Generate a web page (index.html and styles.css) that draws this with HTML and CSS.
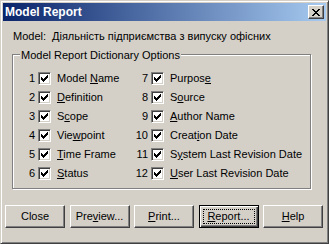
FILE: index.html
```html
<!DOCTYPE html>
<html lang="uk">
<head>
    <meta charset="UTF-8">
    <meta name="viewport" content="width=device-width, initial-scale=1.0">
    <link rel="stylesheet" href="styles.css">
</head>
<body>
    <div class="window">
        <div class="titlebar">
            <span class="title">Model Report</span>
            <button class="close-box" aria-label="Close">
                <svg width="8" height="7" viewBox="0 0 8 7" shape-rendering="crispEdges">
                    <path d="M0 0h2v1h-2z M6 0h2v1h-2z M1 1h2v1h-2z M5 1h2v1h-2z M2 2h4v1h-4z M3 3h2v1h-2z M2 4h4v1h-4z M1 5h2v1h-2z M5 5h2v1h-2z M0 6h2v1h-2z M6 6h2v1h-2z"/>
                </svg>
            </button>
        </div>

        <div class="model-row">
            <span>Model:</span>
            <span>Діяльність підприємства з випуску офісних</span>
        </div>

        <div class="group">
            <span class="group-title">Model Report Dictionary Options</span>
            <div class="options">
                <div class="option"><span class="num">1</span><span class="cb"></span><span class="lbl">Model <u>N</u>ame</span></div>
                <div class="option"><span class="num">2</span><span class="cb"></span><span class="lbl"><u>D</u>efinition</span></div>
                <div class="option"><span class="num">3</span><span class="cb"></span><span class="lbl">S<u>c</u>ope</span></div>
                <div class="option"><span class="num">4</span><span class="cb"></span><span class="lbl">Vie<u>w</u>point</span></div>
                <div class="option"><span class="num">5</span><span class="cb"></span><span class="lbl"><u>T</u>ime Frame</span></div>
                <div class="option"><span class="num">6</span><span class="cb"></span><span class="lbl"><u>S</u>tatus</span></div>
                <div class="option"><span class="num">7</span><span class="cb"></span><span class="lbl">Purpos<u>e</u></span></div>
                <div class="option"><span class="num">8</span><span class="cb"></span><span class="lbl">S<u>o</u>urce</span></div>
                <div class="option"><span class="num">9</span><span class="cb"></span><span class="lbl"><u>A</u>uthor Name</span></div>
                <div class="option"><span class="num">10</span><span class="cb"></span><span class="lbl">Creat<u>i</u>on Date</span></div>
                <div class="option"><span class="num">11</span><span class="cb"></span><span class="lbl">S<u>y</u>stem Last Revision Date</span></div>
                <div class="option"><span class="num">12</span><span class="cb"></span><span class="lbl"><u>U</u>ser Last Revision Date</span></div>
            </div>
        </div>

        <div class="buttons">
            <button class="btn"><span>Close</span></button>
            <button class="btn"><span>Pre<u>v</u>iew...</span></button>
            <button class="btn"><span><u>P</u>rint...</span></button>
            <button class="btn default"><span><u>R</u>eport...</span></button>
            <button class="btn"><span><u>H</u>elp</span></button>
        </div>
    </div>

    <script>
        // same check mark in every box
        const mark = '<svg width="7" height="7" viewBox="0 0 7 7" shape-rendering="crispEdges">' +
            '<path d="M6 0h1v1h-1z M5 1h2v1h-2z M0 2h1v1h-1z M4 2h3v1h-3z M0 3h2v1h-2z M3 3h3v1h-3z M0 4h5v1h-5z M1 5h3v1h-3z M2 6h1v1h-1z"/></svg>';
        document.querySelectorAll('.cb').forEach(cb => {
            cb.innerHTML = mark;
        });
    </script>
</body>
</html>
```

FILE: styles.css
```css
body {
    margin: 0;
    font-family: "Liberation Sans", Arial, sans-serif;
    font-size: 11px;
    line-height: 13px;
    color: #000;
}

.window {
    width: 329px;
    height: 244px;
    box-sizing: border-box;
    background: #d4d0c8;
    border: 1px solid;
    border-color: #d4d0c8 #404040 #404040 #d4d0c8;
    box-shadow: inset 1px 1px #fff, inset -1px -1px #808080;
    padding: 2px;
}

.titlebar {
    height: 18px;
    display: flex;
    align-items: center;
    justify-content: space-between;
    padding: 0 2px;
    background: linear-gradient(to right, #0a246a, #a6caf0);
}

.title {
    color: #fff;
    font-weight: bold;
    font-size: 12px;
}

.close-box {
    width: 16px;
    height: 14px;
    box-sizing: border-box;
    padding: 0;
    display: flex;
    align-items: center;
    justify-content: center;
    background: #d4d0c8;
    border: 1px solid;
    border-color: #fff #404040 #404040 #fff;
    box-shadow: inset -1px -1px #808080;
}

.close-box svg {
    fill: #000;
}

.model-row {
    display: grid;
    grid-template-columns: 39px auto;
    margin: 9px 0 0 10px;
}

.group {
    position: relative;
    width: 299px;
    height: 135px;
    box-sizing: border-box;
    margin: 11px 0 0 9px;
    border: 1px solid #808080;
    box-shadow: inset 1px 1px #fff, 1px 1px #fff;
    padding: 14px 0 0 7px;
}

.group-title {
    position: absolute;
    top: -6px;
    left: 7px;
    padding: 0 1px;
    background: #d4d0c8;
}

.options {
    display: grid;
    grid-template-columns: 113px auto;
    grid-template-rows: repeat(6, 19px);
    grid-auto-flow: column;
}

.option {
    display: flex;
    align-items: center;
}

.num {
    width: 15px;
    text-align: right;
}

.cb {
    width: 13px;
    height: 13px;
    box-sizing: border-box;
    margin-left: 3px;
    display: flex;
    align-items: center;
    justify-content: center;
    background: #fff;
    border: 1px solid;
    border-color: #808080 #fff #fff #808080;
    box-shadow: inset 1px 1px #404040, inset -1px -1px #d4d0c8;
}

.cb svg {
    fill: #000;
}

.lbl {
    margin-left: 6px;
    white-space: nowrap;
}

.buttons {
    display: flex;
    justify-content: space-between;
    width: 318px;
    margin: 16px 0 0 2px;
}

.btn {
    width: 60px;
    height: 23px;
    box-sizing: border-box;
    padding: 3px;
    display: flex;
    background: #d4d0c8;
    border: 1px solid;
    border-color: #fff #404040 #404040 #fff;
    box-shadow: inset -1px -1px #808080;
    font: inherit;
    color: #000;
}

.btn span {
    flex: 1;
    display: flex;
    align-items: center;
    justify-content: center;
    border: 1px dotted transparent;
}

.btn.default {
    border-color: #000;
    box-shadow: inset 1px 1px #fff, inset -1px -1px #404040, inset -2px -2px #808080;
}

.btn.default span {
    border-color: #000;
}
```
